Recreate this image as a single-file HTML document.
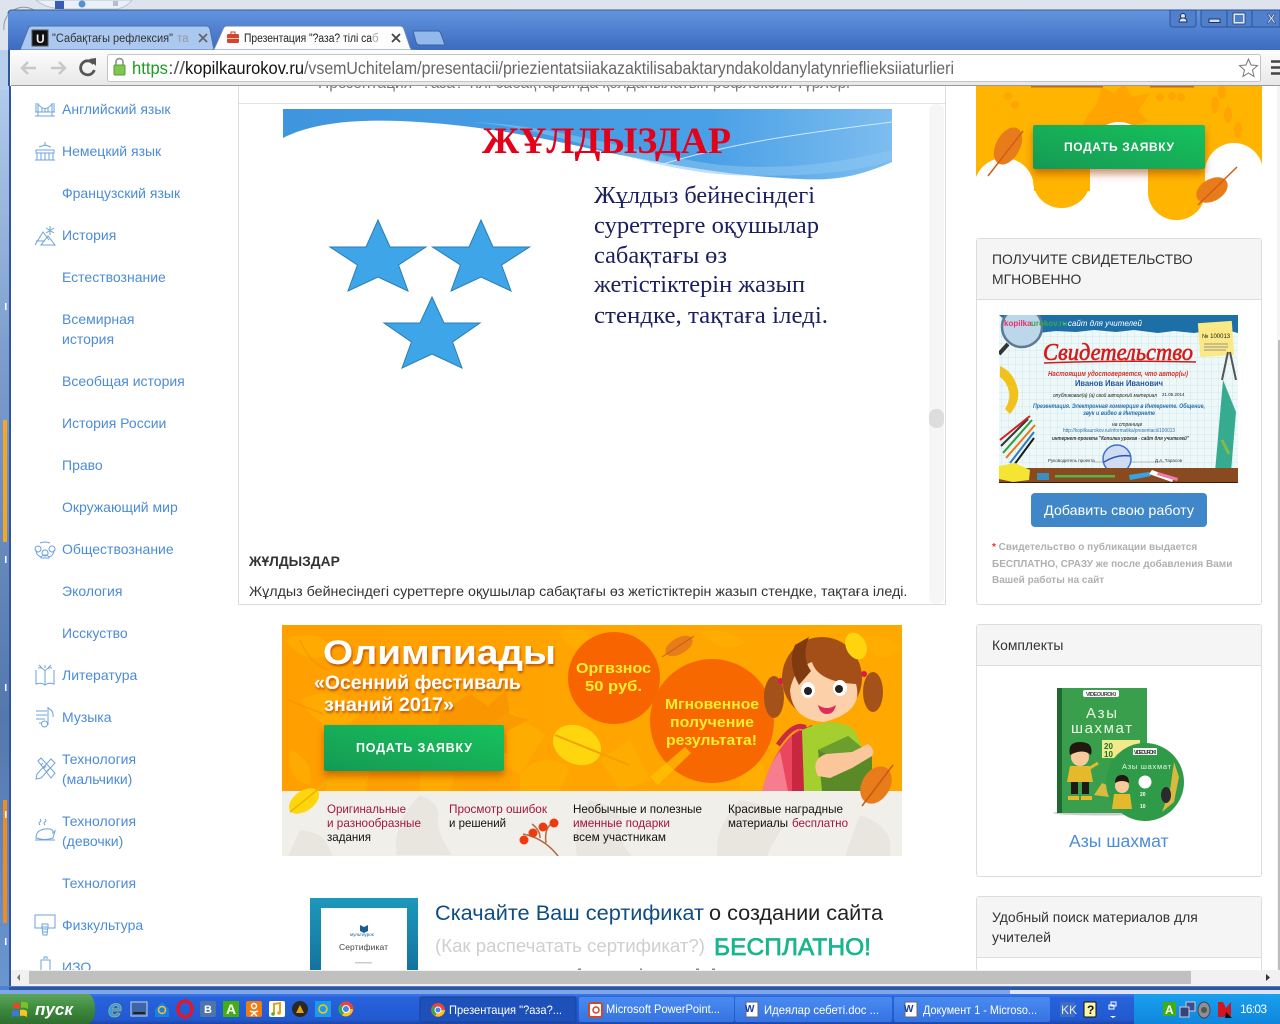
<!DOCTYPE html>
<html lang="ru"><head><meta charset="utf-8"><title>Презентация</title>
<style>
html,body{margin:0;padding:0;width:1280px;height:1024px;overflow:hidden;background:#fff;font-family:"Liberation Sans","DejaVu Sans",sans-serif;color:#333}
.a{position:absolute;white-space:nowrap}
svg{position:absolute;left:0;top:0}
.side{color:#4c8cd6;font-size:14px;line-height:20px;left:62px}
.ph{font-size:13.9px;line-height:20px;color:#333;left:992px}
.panel{position:absolute;left:976px;width:284px;border:1px solid #ddd;border-radius:3px;background:#fff}
.phead{position:absolute;left:0;top:0;right:0;background:#f5f5f5;border-bottom:1px solid #ddd}
.sm{font-size:10px;line-height:16px;color:#b0b0b0;font-weight:bold;left:992px}
</style></head><body>

<!-- page content -->
<div class="a" style="left:238px;top:86px;width:706px;height:518px;border-left:1px solid #ddd;border-right:1px solid #ddd;border-bottom:1px solid #ddd"></div>
<div class="a" style="left:239px;top:103px;width:706px;height:1px;background:#dfe3e8"></div>
<div class="a" style="left:318px;top:75px;font-size:15.6px;line-height:18px;color:#777">Презентация "?аза? тілі сабақтарында қолданылатын рефлексия түрлері</div>
<div class="a" style="left:929px;top:104px;width:15px;height:500px;background:#f6f6f6;border-radius:7px"></div>
<div class="a" style="left:929px;top:409px;width:15px;height:19px;background:#ddd;border-radius:7px"></div>
<div class="a" style="left:249px;top:553px;font-size:13.8px;line-height:18px;font-weight:bold;color:#333">ЖҰЛДЫЗДАР</div>
<div class="a" style="left:249px;top:583px;font-size:14.25px;line-height:18px;color:#333">Жұлдыз бейнесіндегі суреттерге оқушылар сабақтағы өз жетістіктерін жазып стендке, тақтаға іледі.</div>

<div class="panel" style="top:238px;height:365px"><div class="phead" style="height:60px"></div></div>
<div class="panel" style="top:624px;height:251px"><div class="phead" style="height:40px"></div></div>
<div class="panel" style="top:896px;height:100px"><div class="phead" style="height:60px"></div></div>

<svg width="1280" height="1024" viewBox="0 0 1280 1024" font-family="Liberation Sans, sans-serif">
<defs>
<clipPath id="cImg"><rect x="283" y="109" width="609" height="270"/></clipPath>
<clipPath id="cBan"><rect x="282" y="625" width="620" height="166"/></clipPath>
<clipPath id="cBan2"><rect x="282" y="625" width="620" height="231"/></clipPath>
<clipPath id="cTop"><rect x="976" y="86" width="286" height="140"/></clipPath>
<clipPath id="cCert"><rect x="999" y="315" width="239" height="168"/></clipPath>
<clipPath id="cMain"><rect x="0" y="86" width="1280" height="884"/></clipPath>
<linearGradient id="btn" x1="0" y1="1" x2="1" y2="0"><stop offset="0" stop-color="#119a55"/><stop offset="1" stop-color="#16c25c"/></linearGradient>
<linearGradient id="bg1" x1="0" y1="0" x2="1" y2="0"><stop offset="0" stop-color="#ff9f00"/><stop offset="1" stop-color="#ffa900"/></linearGradient>
<pattern id="grid" width="7" height="7" patternUnits="userSpaceOnUse"><rect width="7" height="7" fill="#eef8f8"/><path d="M7 0H0V7" fill="none" stroke="#b8dde2" stroke-width=".6"/></pattern>
<linearGradient id="wave" x1="0" y1="0" x2="1" y2="0"><stop offset="0" stop-color="#3f96de"/><stop offset=".7" stop-color="#4aa0e6"/><stop offset="1" stop-color="#7dbdf0"/></linearGradient>
<linearGradient id="cert" x1="0" y1="0" x2="0" y2="1"><stop offset="0" stop-color="#1c98bb"/><stop offset="1" stop-color="#136f9c"/></linearGradient>
<filter id="sh" x="-20%" y="-20%" width="140%" height="150%"><feDropShadow dx="0" dy="5" stdDeviation="4" flood-color="#a33a00" flood-opacity=".55"/></filter>
<filter id="ts" x="-5%" y="-20%" width="110%" height="150%"><feDropShadow dx="1" dy="2" stdDeviation="1" flood-color="#b23c00" flood-opacity=".8"/></filter>
</defs>

<!-- slide image -->
<g clip-path="url(#cImg)">
<path d="M283 109H892V162C860 176 835 181 800 179C730 176 670 165 596 150C530 135 470 124 400 121C350 119 310 124 283 138Z" fill="url(#wave)"/>
<path d="M470 122C560 128 640 170 730 175 800 178 860 172 892 160V150C830 165 780 170 720 165 640 155 560 125 470 122Z" fill="#8cc6f2" opacity=".55"/>
<path d="M660 165C740 140 830 130 892 122" stroke="#cfe8fb" fill="none" stroke-width="1"/>
<text x="482" y="153" font-family="Liberation Serif,serif" font-weight="bold" font-size="37" fill="#e50019" textLength="249" lengthAdjust="spacingAndGlyphs">ЖҰЛДЫЗДАР</text>
<g font-family="Liberation Serif,serif" font-size="24" fill="#1a1f5e">
<text x="594" y="203" textLength="221" lengthAdjust="spacingAndGlyphs">Жұлдыз бейнесіндегі</text>
<text x="594" y="233" textLength="225" lengthAdjust="spacingAndGlyphs">суреттерге оқушылар</text>
<text x="594" y="263" textLength="133" lengthAdjust="spacingAndGlyphs">сабақтағы өз</text>
<text x="594" y="292" textLength="211" lengthAdjust="spacingAndGlyphs">жетістіктерін жазып</text>
<text x="594" y="323" textLength="234" lengthAdjust="spacingAndGlyphs">стендке, тақтаға іледі.</text>
</g>
<g fill="#3da5e8" stroke="#2c7db0" stroke-width="1">
<polygon points="378,220 390,247 426,247 398.6,265 408,291 378,277 348,291 357.4,265 330,247 366,247"/>
<polygon points="481,220 493,247 529.6,247 501.6,265 511,291 481,277 451,291 460.4,265 432.5,247 469,247"/>
<polygon points="432,297 444,323 480,323 452.6,342 462,368 432,354 402,368 411.4,342 384,323 420,323"/>
</g>
</g>

<!-- olympiad banner -->
<g clip-path="url(#cBan2)">
<rect x="282" y="625" width="620" height="166" fill="url(#bg1)"/>
<rect x="282" y="791" width="620" height="65" fill="#f1efea"/>
<g fill="#ffb000" opacity=".7">
<path d="M285 640q30-15 50 10q-25 20-50-10zM300 700q40-20 60 15q-30 30-60-15zM470 740l40-30 35 25-25 40zM560 632q25-10 40 12q-25 18-40-12zM860 640q20-10 40 8q-18 22-40-8z"/>
<path d="M290 750q25 10 20 35q-25-5-20-35zM520 775q20-25 50-8l-10 24h-40zM600 760l30-20 20 40-30 10z"/>
<path d="M330 775q15-10 40-5l-5 21h-40zM420 770q20-5 35 5l-5 16h-30zM700 632q25-5 45 10q-20 15-45-10zM740 770l15-30 15 50h-30z"/>
</g>
<g fill="#f58a00" opacity=".45">
<path d="M440 712l30-18 18 12 18-16 4 24 18 6-22 12 2 22-24-8-18 14-6-22-22-6z"/>
<path d="M300 640q10 25 30 30M288 700l35 14" stroke="#f58a00" fill="none" stroke-width="2"/>
</g>
<g fill="#e9e6df">
<path d="M420 795q20 8 18 22q-2 14 14 38h-55q-6-30 23-60zM590 800q28 6 32 22q-6 18 10 34h-55q-6-30 13-56zM740 800q32 4 45 25q-12 16-18 31h-50q-2-30 23-56zM860 815q24 8 30 25v16h-45zM300 830q18 2 25 10l8 16h-45z"/>
</g>
<circle cx="614" cy="678" r="46" fill="#f76400"/>
<circle cx="712" cy="721" r="62" fill="#f76900"/>
<path d="M650 777l35-30 6 6-33 32z" fill="#ffc400" opacity=".7"/>
<ellipse cx="679" cy="646" rx="15" ry="8" transform="rotate(-30 679 646)" fill="#e97c1a"/>
<path d="M662 657L694 636" stroke="#c25b14" stroke-width="1"/>
<ellipse cx="577" cy="745" rx="25" ry="19" transform="rotate(25 577 745)" fill="#ffd60d"/>
<path d="M555 735L629 765" stroke="#f2a100" stroke-width="2"/>
<ellipse cx="304" cy="801" rx="17" ry="10" transform="rotate(-35 304 801)" fill="#ffd60d"/>
<path d="M290 812L332 778" stroke="#f0b400" stroke-width="1.5"/>
<text x="323" y="664" font-size="34" font-weight="bold" fill="#fff" filter="url(#ts)" textLength="233" lengthAdjust="spacingAndGlyphs">Олимпиады</text>
<text x="314" y="689" font-size="19" font-weight="bold" fill="#fff" filter="url(#ts)" textLength="207" lengthAdjust="spacingAndGlyphs">«Осенний фестиваль</text>
<text x="324" y="711" font-size="19" font-weight="bold" fill="#fff" filter="url(#ts)" textLength="130" lengthAdjust="spacingAndGlyphs">знаний 2017»</text>
<rect x="324" y="725" width="180" height="46" rx="2" fill="url(#btn)" filter="url(#sh)"/>
<text x="356" y="752" font-size="12.5" font-weight="bold" fill="#fff" textLength="116">ПОДАТЬ ЗАЯВКУ</text>
<g font-size="15" font-weight="bold" fill="#ffee2e">
<text x="576" y="673" textLength="75" lengthAdjust="spacingAndGlyphs">Оргвзнос</text>
<text x="585" y="691" textLength="57" lengthAdjust="spacingAndGlyphs">50 руб.</text>
<text x="665" y="709" textLength="94" lengthAdjust="spacingAndGlyphs">Мгновенное</text>
<text x="670" y="727" textLength="84" lengthAdjust="spacingAndGlyphs">получение</text>
<text x="666" y="745" textLength="91" lengthAdjust="spacingAndGlyphs">результата!</text>
</g>
<!-- girl -->
<g clip-path="url(#cBan)">
<path d="M762 791q12-45 38-62l18 62z" fill="#ec4560"/><path d="M762 791q6-25 18-40l8 40z" fill="#f57d8e"/>
<path d="M778 745q15-22 26-18l14 40" fill="none" stroke="#c92b45" stroke-width="5"/>
<path d="M792 735l20-10 8 30-14 36h-14z" fill="#c8283f"/>
<path d="M802 730q30-14 50-2q14 16 16 63h-64z" fill="#a4cf2f"/>
<path d="M818 750l30-14 24 20v35h-50z" fill="#5a8a28"/>
<path d="M818 750l26 12 28-6-24-20z" fill="#6b9e2c"/>
<path d="M818 776q-8-16 8-22l26-2 16-8q8 6 4 12l-20 12-22 10z" fill="#fbc79a"/>
</g>
<ellipse cx="774" cy="697" rx="10" ry="21" fill="#a5521a"/>
<ellipse cx="873" cy="692" rx="10" ry="20" fill="#a5521a"/>
<circle cx="781" cy="681" r="3" fill="#e0174e"/><circle cx="864" cy="674" r="3" fill="#e0174e"/>
<ellipse cx="822" cy="678" rx="40" ry="41" fill="#a44f17"/>
<path d="M790 690q4-22 22-28q6 20 44 22q8 28-32 38q-32-2-34-32z" fill="#fcd0a8"/>
<path d="M809 637q-8 20 2 34l-12 14q-12-22-4-40z" fill="#7f3a10"/>
<ellipse cx="808" cy="690" rx="7" ry="8" fill="#fff"/><circle cx="808" cy="691" r="4" fill="#222"/>
<ellipse cx="840" cy="688" rx="7" ry="8" fill="#fff"/><circle cx="839" cy="689" r="4" fill="#222"/>
<path d="M818 705q9 6 18 0q-2 9-9 9t-9-9z" fill="#e02b5d"/>
<ellipse cx="856" cy="646" rx="10" ry="14" transform="rotate(-25 856 646)" fill="#ffd60d"/>
<ellipse cx="876" cy="785" rx="14" ry="20" transform="rotate(30 876 785)" fill="#e97c1a"/>
<path d="M862 806L893 765" stroke="#c25b14" stroke-width="1.5"/>
<!-- lower texts -->
<g font-size="12" fill="#111">
<text x="327" y="813" fill="#a3163f" textLength="79" lengthAdjust="spacingAndGlyphs">Оригинальные</text>
<text x="327" y="827" fill="#a3163f" textLength="94" lengthAdjust="spacingAndGlyphs">и разнообразные</text>
<text x="327" y="841" textLength="44" lengthAdjust="spacingAndGlyphs">задания</text>
<text x="449" y="813" fill="#a3163f" textLength="98" lengthAdjust="spacingAndGlyphs">Просмотр ошибок</text>
<text x="449" y="827" textLength="57" lengthAdjust="spacingAndGlyphs">и решений</text>
<text x="573" y="813" textLength="129" lengthAdjust="spacingAndGlyphs">Необычные и полезные</text>
<text x="573" y="827" fill="#a3163f" textLength="97" lengthAdjust="spacingAndGlyphs">именные подарки</text>
<text x="573" y="841" textLength="93" lengthAdjust="spacingAndGlyphs">всем участникам</text>
<text x="728" y="813" textLength="115" lengthAdjust="spacingAndGlyphs">Красивые наградные</text>
<text x="728" y="827" textLength="60" lengthAdjust="spacingAndGlyphs">материалы</text>
<text x="792" y="827" fill="#a3163f" textLength="56" lengthAdjust="spacingAndGlyphs">бесплатно</text>
</g>
<path d="M558 856q-14-18-35-22M546 843q-2-14 6-20M540 838q0-8-8-14" fill="none" stroke="#b36b45" stroke-width="1.5"/>
<g fill="#ee3a0c"><circle cx="554" cy="823" r="4.5"/><circle cx="543" cy="827" r="4.5"/><circle cx="533" cy="833" r="4.5"/><circle cx="524" cy="840" r="4.5"/></g>
</g>

<g clip-path="url(#cMain)">
<!-- top right banner -->
<g clip-path="url(#cTop)">
<rect x="976" y="86" width="286" height="105" fill="#ffb400"/>
<g fill="#ffa400">
<path d="M1080 130q10-20 16-25l6-18 12 6 10-10 8 14 18-4-12 18 10 10-20 6-6 20-18-8z"/>
<circle cx="1008" cy="96" r="4"/><circle cx="1015" cy="105" r="4"/><circle cx="1160" cy="97" r="4"/><circle cx="1172" cy="96" r="4"/><circle cx="1181" cy="97" r="4"/>
<ellipse cx="1215" cy="105" rx="4" ry="8"/><ellipse cx="1228" cy="115" rx="4" ry="8"/><ellipse cx="1238" cy="130" rx="4" ry="8"/><ellipse cx="1222" cy="92" rx="4" ry="7"/>
</g>
<path d="M1031 86h72v1.500h-72zM1150 86h44v1.500h-44z" fill="#c4691a"/>
<circle cx="1004" cy="188" r="30" fill="#fff"/><rect x="974" y="188" width="60" height="40" fill="#fff"/>
<circle cx="1119" cy="151" r="29" fill="#fff"/><rect x="1090" y="151" width="58" height="80" fill="#fff"/>
<circle cx="1234" cy="172" r="29" fill="#fff"/><rect x="1205" y="172" width="60" height="60" fill="#fff"/>
<rect x="1033" y="150" width="57" height="58" rx="28" fill="#ffb400"/><rect x="1148" y="150" width="57" height="70" rx="28" fill="#ffb400"/>
<rect x="1033" y="150" width="57" height="25" fill="#ffb400"/><rect x="1148" y="150" width="57" height="25" fill="#ffb400"/>
<ellipse cx="1008" cy="146" rx="12" ry="20" transform="rotate(28 1008 146)" fill="#e97c1a"/>
<path d="M988 176L1023 131" stroke="#d25c18" stroke-width="1.5"/>
<ellipse cx="1212" cy="190" rx="17" ry="11" transform="rotate(-30 1212 190)" fill="#e97c1a"/>
<path d="M1198 205L1237 167" stroke="#d25c18" stroke-width="1.5"/>
<rect x="1033" y="125" width="172" height="44" rx="2" fill="url(#btn)" filter="url(#sh)"/>
<text x="1064" y="151" font-size="12" font-weight="bold" fill="#fff" textLength="110">ПОДАТЬ ЗАЯВКУ</text>
</g>

<!-- certificate of creating site -->
<rect x="310" y="898" width="108" height="80" fill="url(#cert)"/>
<rect x="321" y="908" width="86" height="70" fill="#fff"/>
<path d="M360 925l4 2 4-2v6l-4 2-4-2z" fill="#1d5c8f"/>
<text x="350" y="936" font-size="4.5" fill="#1d5c8f">мультиурок</text>
<text x="339" y="950" font-size="8.5" fill="#444" textLength="49">Сертификат</text>
<rect x="355" y="962" width="17" height="1.5" fill="#ccc"/>
<text x="435" y="920" font-size="21" fill="#0f4c85" textLength="269" lengthAdjust="spacingAndGlyphs">Скачайте Ваш сертификат</text>
<text x="709" y="920" font-size="21" fill="#222" textLength="174" lengthAdjust="spacingAndGlyphs">о создании сайта</text>
<text x="435" y="952" font-size="18.5" fill="#cfcfcf" textLength="270" lengthAdjust="spacingAndGlyphs">(Как распечатать сертификат?)</text>
<text x="714" y="955" font-size="24" fill="#19b58f" stroke="#19b58f" stroke-width=".7" textLength="157" lengthAdjust="spacingAndGlyphs">БЕСПЛАТНО!</text>
<path d="M578 968.500h3v1.500h-3zM640 968.500h2v1.500h-2zM696 968.500h3v1.500h-3zM712 968.500h3v1.500h-3z" fill="#888"/>

<!-- certificate -->
<g clip-path="url(#cCert)">
<rect x="999" y="315" width="239" height="168" fill="url(#grid)"/>
<path d="M999 315H1238V333l-8-2-10 3-12-3-14 2-20-2-16 2-24-3-18 2-22-2-18 2-20-1-18 2-18-1z" fill="#1d6fa8"/>
<circle cx="1022" cy="327" r="20" fill="#bcd6ea" stroke="#5b7a93" stroke-width="2.5"/>
<text x="1004" y="326" font-size="8" font-weight="bold" fill="#e3316a">kopilka</text><text x="1031" y="326" font-size="8" font-weight="bold" fill="#39a849">urokov.ru</text>
<path d="M1008 344l-9 10" stroke="#333" stroke-width="4"/>
<text x="1063" y="326" font-size="8" font-style="italic" fill="#fff">- сайт для учителей</text>
<rect x="1199" y="322" width="34" height="34" fill="#fbe985" transform="rotate(-4 1216 339)"/>
<text x="1202" y="338" font-size="6" fill="#222">№ 100013</text>
<path d="M1204 344h24M1204 347h24M1204 350h22" stroke="#778" stroke-width=".8"/>
<text x="1043" y="360" font-family="Liberation Serif,serif" font-style="italic" font-size="24" fill="#d41c1c" stroke="#d41c1c" stroke-width=".6" textLength="150" lengthAdjust="spacingAndGlyphs">Свидетельство</text>
<path d="M1044 363q70-3 152-1" stroke="#c42020" stroke-width="1.5" fill="none"/>
<text x="1048" y="376" font-size="7" font-style="italic" font-weight="bold" fill="#d6302a" textLength="140" lengthAdjust="spacingAndGlyphs">Настоящим удостоверяется, что автор(ы)</text>
<text x="1075" y="386" font-size="8" font-weight="bold" fill="#2456a0" textLength="88" lengthAdjust="spacingAndGlyphs">Иванов Иван Иванович</text>
<text x="1053" y="397" font-size="5.5" font-style="italic" fill="#222" textLength="104" lengthAdjust="spacingAndGlyphs">опубликовал(а) (а) свой авторский материал</text>
<text x="1162" y="396" font-size="4.5" fill="#222">21.05.2014</text>
<text x="1033" y="408" font-size="6" font-style="italic" font-weight="bold" fill="#2a6fae" textLength="172" lengthAdjust="spacingAndGlyphs">Презентация. Электронная коммерция в Интернете. Общение,</text>
<text x="1083" y="415" font-size="6" font-style="italic" font-weight="bold" fill="#2a6fae" textLength="72" lengthAdjust="spacingAndGlyphs">звук и видео в Интернете</text>
<text x="1112" y="426" font-size="5" font-style="italic" fill="#222">на странице</text>
<text x="1063" y="432" font-size="5" fill="#2a6fae" textLength="112" lengthAdjust="spacingAndGlyphs">http://kopilkaurokov.ru/informatika/presentacii/100013</text>
<text x="1052" y="440" font-size="5.5" font-style="italic" font-weight="bold" fill="#333" textLength="137" lengthAdjust="spacingAndGlyphs">интернет-проекта "Копилка уроков - сайт для учителей"</text>
<text x="1048" y="462" font-size="4.5" fill="#333">Руководитель проекта</text>
<path d="M1093 462h72" stroke="#888" stroke-width=".6"/>
<text x="1155" y="462" font-size="4.5" fill="#333">Д.А. Тарасов</text>
<circle cx="1117" cy="459" r="14" fill="#cfdcf4" stroke="#3e6fd0" stroke-width="1.5"/>
<path d="M1104 462q13-8 26-6" stroke="#2c56b8" stroke-width="1.500" fill="none"/>
<path d="M1000 366q14 6 18 24 2 12-8 24l-5-5q6-10 4-18-3-10-9-14z" fill="#f2c21c"/>
<g stroke-width="2"><path d="M1032 420L1003 453" stroke="#2f9d3c"/><path d="M1028 419L1001 446" stroke="#333"/><path d="M1035 425L1006 458" stroke="#e67817"/><path d="M1034 432L1010 463" stroke="#2b7cc8"/><path d="M1030 416L1000 440" stroke="#d82020"/><path d="M1034 438L1014 465" stroke="#1a1a1a"/></g>
<path d="M1223 380l-8 92h16l5-60z" fill="#36ab8f"/>
<path d="M1228 352l-6 28M1230 352l6 28" stroke="#555" stroke-width="2"/>
<path d="M1222 440l7 14" stroke="#8ab845" stroke-width="3"/>
<rect x="999" y="468" width="239" height="15" fill="#8a4a20"/>
<rect x="999" y="482" width="239" height="1" fill="#3a1c0a"/>
<path d="M999 466l16-3 15 7-1 10-16 2-14-3z" fill="#f4e532"/>
<rect x="1037" y="473" width="12" height="7" fill="#3a8fc2"/>
<rect x="1055" y="475" width="60" height="2.5" fill="#4fb54d"/>
<path d="M1129 475l20-3 2 4-21 4z" fill="#35a6e2"/><path d="M1152 470l22 8-2 4-23-8z" fill="#fff"/><path d="M1158 472l20 6-1 3-20-6z" fill="#f07aa8"/>
</g>

<!-- add button -->
<rect x="1031" y="493" width="176" height="34" rx="4" fill="#3f87c9"/>
<text x="1044" y="515" font-size="14" fill="#fff" textLength="150" lengthAdjust="spacingAndGlyphs">Добавить свою работу</text>

<!-- DVD -->
<ellipse cx="1105" cy="813" rx="52" ry="2.5" fill="#ccc"/>
<rect x="1057" y="688" width="90" height="125" fill="#3a9f4c"/>
<rect x="1057" y="688" width="5" height="125" fill="#1f6b2f"/>
<rect x="1083" y="690" width="36" height="7" rx="2" fill="#fff"/>
<text x="1086" y="696" font-size="5.5" font-weight="bold" fill="#444" textLength="30">VIDEOUROKI</text>
<text x="1086" y="718" font-size="15" fill="#e9f7e4" textLength="31">Азы</text>
<text x="1071" y="733" font-size="15" fill="#e9f7e4" textLength="61">шахмат</text>
<rect x="1102" y="740" width="38" height="18" fill="#f3e88a"/>
<text x="1104" y="749" font-size="8" font-weight="bold" fill="#173">20</text><text x="1104" y="757" font-size="8" font-weight="bold" fill="#173">10</text>
<circle cx="1080" cy="757" r="9" fill="#f7c99b"/>
<path d="M1070 755q-3-13 10-13 14 0 11 13-8-7-21 0z" fill="#22180f"/>
<path d="M1070 766h20l3 16h-26z" fill="#e4b92b"/>
<path d="M1071 782h7v12h-7zM1082 782h7v12h-7z" fill="#1e1a16"/>
<path d="M1068 796h11v4h-11zM1081 796h11v4h-11z" fill="#e4b92b"/>
<path d="M1090 768l8-5" stroke="#e4b92b" stroke-width="3"/>
<path d="M1094 795l8-12 14 6v9z" fill="#d9b93f"/>
<circle cx="1145" cy="782" r="39" fill="#2f9a48"/>
<path d="M1133 748h24v7h-24z" fill="#f4f7f2"/>
<text x="1134" y="754" font-size="5" font-weight="bold" fill="#333" textLength="22">VIDEOUROKI</text>
<text x="1122" y="769" font-size="7.5" fill="#e9f7e4" textLength="49">Азы шахмат</text>
<circle cx="1145" cy="782" r="6.5" fill="#fff"/>
<circle cx="1122" cy="786" r="7" fill="#f7c99b"/><path d="M1115 783q0-8 7-8t7 8q-7-4-14 0z" fill="#22180f"/>
<path d="M1114 794h16l2 15h-20z" fill="#e4b92b"/>
<text x="1140" y="796" font-size="5" font-weight="bold" fill="#fff">20</text><text x="1140" y="808" font-size="5" font-weight="bold" fill="#fff">10</text>
<path d="M1174 762l5 15-5 25-12 10 8-22z" fill="#d9b93f"/><ellipse cx="1166" cy="795" rx="5" ry="8" fill="#2a2a2a"/>
</g>
</svg>

<!-- sidebar -->
<div class="a side" style="top:99px">Английский язык</div>
<div class="a side" style="top:141px">Немецкий язык</div>
<div class="a side" style="top:183px">Французский язык</div>
<div class="a side" style="top:225px">История</div>
<div class="a side" style="top:267px">Естествознание</div>
<div class="a side" style="top:309px">Всемирная<br>история</div>
<div class="a side" style="top:371px">Всеобщая история</div>
<div class="a side" style="top:413px">История России</div>
<div class="a side" style="top:455px">Право</div>
<div class="a side" style="top:497px">Окружающий мир</div>
<div class="a side" style="top:539px">Обществознание</div>
<div class="a side" style="top:581px">Экология</div>
<div class="a side" style="top:623px">Исскуство</div>
<div class="a side" style="top:665px">Литература</div>
<div class="a side" style="top:707px">Музыка</div>
<div class="a side" style="top:749px">Технология<br>(мальчики)</div>
<div class="a side" style="top:811px">Технология<br>(девочки)</div>
<div class="a side" style="top:873px">Технология</div>
<div class="a side" style="top:915px">Физкультура</div>
<div class="a side" style="top:957px">ИЗО</div>

<!-- panel texts -->
<div class="a ph" style="top:249px">ПОЛУЧИТЕ СВИДЕТЕЛЬСТВО<br>МГНОВЕННО</div>
<div class="a sm" style="top:540px"><span style="color:#e33">*</span> Свидетельство о публикации выдается</div>
<div class="a sm" style="top:557px">БЕСПЛАТНО, СРАЗУ же после добавления Вами</div>
<div class="a sm" style="top:573px">Вашей работы на сайт</div>
<div class="a ph" style="top:635px">Комплекты</div>
<div class="a" style="left:1069px;top:831px;font-size:17.6px;line-height:20px;color:#4c8cd6">Азы шахмат</div>
<div class="a ph" style="top:907px">Удобный поиск материалов для<br>учителей</div>

<!-- chrome overlay -->
<svg width="1280" height="1024" viewBox="0 0 1280 1024" font-family="Liberation Sans, sans-serif">
<defs>
<linearGradient id="tb" x1="0" y1="0" x2="0" y2="1"><stop offset="0" stop-color="#6295e0"/><stop offset="1" stop-color="#3d6bc0"/></linearGradient>
<linearGradient id="tool" x1="0" y1="0" x2="0" y2="1"><stop offset="0" stop-color="#fdfdfd"/><stop offset="1" stop-color="#e8e8e8"/></linearGradient>
<linearGradient id="strip" x1="0" y1="0" x2="0" y2="1"><stop offset="0" stop-color="#b2cbec"/><stop offset=".3" stop-color="#7c9dcc"/><stop offset=".7" stop-color="#5478ad"/><stop offset="1" stop-color="#6a96d0"/></linearGradient>
<linearGradient id="task" x1="0" y1="0" x2="0" y2="1"><stop offset="0" stop-color="#3d7ae6"/><stop offset=".12" stop-color="#2663dc"/><stop offset=".85" stop-color="#2259d0"/><stop offset="1" stop-color="#1b45a8"/></linearGradient>
<linearGradient id="start" x1="0" y1="0" x2="0" y2="1"><stop offset="0" stop-color="#5ca55b"/><stop offset=".5" stop-color="#3d8a3d"/><stop offset="1" stop-color="#2f6e30"/></linearGradient>
<linearGradient id="tray" x1="0" y1="0" x2="0" y2="1"><stop offset="0" stop-color="#1aa0ee"/><stop offset="1" stop-color="#0f86dc"/></linearGradient>
<linearGradient id="tbn" x1="0" y1="0" x2="0" y2="1"><stop offset="0" stop-color="#4a8bf0"/><stop offset="1" stop-color="#3573e2"/></linearGradient>
</defs>

<!-- sidebar icons -->
<g fill="none" stroke="#6ea3dc" stroke-width="1">
<path d="M35 112h20M35 116h20M38 103v13M52 103v13M36 103v9M54 103v9M38 104q7 9 14 0M42 108v4M45 109v3M48 108v4"/>
<path d="M45 142v4M39 147l6-2 6 2M36 150h18v3H36zM37 153v7M41 153v7M45 153v7M49 153v7M53 153v7M35 160h20"/>
<path d="M35 245l8-13 6 8M36 241h9M41 245h14l-7-9zM50 226v9M46 228l8 5M54 228l-8 5"/>
<path d="M38 546a3 3 0 1 0 .1 0M52 546a3 3 0 1 0 .1 0M45 550a3 3 0 1 0 .1 0M41 558c0-4 8-4 8 0zM36 550c0 4 2 6 5 7M54 550c0 4-2 6-5 7M40 543q5-2 10 0"/>
<path d="M36 670v14q5-2 9 1 4-3 9-1v-14M38 668q4-1 7 3 3-4 7-3M45 671v14M39 665l3 3M45 665v3M51 665l-3 3"/>
<path d="M36 711h11M36 715h11M36 719h9M39 723h3"/>
<path d="M48 707v18M48 708q6 3 5 9"/><circle cx="44.500" cy="724" r="3"/>
<path d="M37 774l14-15 4 4-14 15-5 1zM38 761l3-3 14 15-4 5zM41 765l2-2M44 768l2-2M47 771l2-2"/>
<path d="M35 840h20M36 838q0-8 9-9t8 4l2-2-2 7q-8 3-17 0zM40 825q-2-2 0-3t0-3M45 825q-2-2 0-3t0-3"/>
<path d="M42 928h-7v-13h20v13h-7M42 924h6v3h-6zM42 927l1 8h4l1-8M42 929h6M43 932h4"/>
<path d="M41 972v-12h9v12M44 959v-2h3v2"/>
</g>

<!-- left strip -->
<rect x="0" y="86" width="9" height="900" fill="url(#strip)"/>
<rect x="9" y="86" width="2" height="900" fill="#2f55a0"/>
<rect x="3" y="420" width="4" height="122" fill="#f5a623"/>
<rect x="3" y="800" width="4" height="123" fill="#f28c1e"/>
<g fill="#fff"><rect x="5" y="303" width="1.500" height="7"/><rect x="5" y="556" width="1.500" height="7"/><rect x="5" y="684" width="1.500" height="7"/><rect x="5" y="811" width="1.500" height="7"/><rect x="5" y="938" width="1.500" height="7"/></g>

<!-- scrollbar -->
<rect x="11" y="970" width="1269" height="17" fill="#f1f1f1"/>
<rect x="29" y="971" width="1162" height="13" fill="#c0c0c0"/>
<path d="M20 974v7l-3-3.500z" fill="#777"/><path d="M1266 974v7l4-3.500z" fill="#333"/>

<!-- desktop top -->
<rect x="0" y="0" width="1280" height="10" fill="#dde4ee"/>
<rect x="0" y="10" width="9" height="76" fill="#dce4ee"/>
<path d="M4 30a20 20 0 0 1 30-20" fill="none" stroke="#8d98a8" stroke-width="1"/>
<path d="M36 0q10 9 30 9h50q10-1 16-9z" fill="#eaf0f8" stroke="#b7c4d6"/>
<rect x="55" y="1" width="9" height="8" fill="#3a5bb0"/>
<circle cx="82" cy="4" r="3.500" fill="#5b8fd0"/><rect x="113" y="1" width="5" height="5" fill="#b5bfcc"/>
<rect x="0" y="50" width="8" height="40" fill="#b8d0ee"/>

<!-- title bar -->
<path d="M8 14q0-4 4-4H1280V50H8z" fill="url(#tb)"/>
<path d="M8 14q0-4 4-4H1280" fill="none" stroke="#3f5a86"/>
<path d="M1170 10h26v14q0 3-3 3h-20q-3 0-3-3z" fill="#507fcc" stroke="#2f5296"/>
<path d="M1201 10h79v17h-76q-3 0-3-3z" fill="#507fcc" stroke="#2f5296"/>
<path d="M1227 10v17M1252 10v17" stroke="#2f5296"/>
<circle cx="1183" cy="16" r="2.500" fill="#dbe6f6" stroke="#1f3260"/><path d="M1179 22q0-4 4-4t4 4z" fill="#dbe6f6" stroke="#1f3260"/>
<rect x="1209" y="19" width="11" height="3.500" fill="#cfdff5" stroke="#1f3260"/>
<rect x="1234" y="14" width="10" height="9" fill="none" stroke="#dbe6f6" stroke-width="2"/><rect x="1233" y="13" width="12" height="11" fill="none" stroke="#1f3260" stroke-width=".7"/>
<text x="1267" y="23" font-size="13" font-weight="bold" fill="#dbe6f6" stroke="#1f3260" stroke-width=".5">X</text>

<!-- tabs -->
<path d="M20 50L28 29q1-3 4-3H206q3 0 4 3l4 21z" fill="#aac8f0" stroke="#4c6fa8"/>
<path d="M208 50h3q3 0 4-3l8-18q1-3 4-3H400q3 0 4 3l6 18q1 3 4 3h3z" fill="#fdfdfd" stroke="#6a83a8"/>
<path d="M413 31h25q2 0 3 3l4 11h-25q-3 0-4-3z" fill="#93b8ea" stroke="#3b62a8"/>
<rect x="32" y="30" width="16" height="16" fill="#111" stroke="#555"/>
<text x="36" y="43" font-size="12" font-weight="bold" fill="#eee">U</text>
<text x="52" y="42" font-size="11.500" fill="#333" textLength="121" lengthAdjust="spacingAndGlyphs">"Сабақтағы рефлексия"</text>
<text x="177" y="42" font-size="11.500" fill="#999">та</text>
<path d="M199 34l8 8M207 34l-8 8" stroke="#666" stroke-width="1.800"/>
<rect x="227" y="34" width="12" height="9" rx="1.500" fill="#d2452a"/><path d="M231 34v-2h4v2" stroke="#d2452a" fill="none"/><rect x="227" y="38" width="12" height="1" fill="#f4c6b0"/>
<text x="244" y="42" font-size="11.500" fill="#222" textLength="128" lengthAdjust="spacingAndGlyphs">Презентация "?аза? тілі са</text>
<text x="372" y="42" font-size="11.500" fill="#aaa">б</text>
<path d="M392 34l8 8M400 34l-8 8" stroke="#444" stroke-width="1.800"/>

<!-- toolbar -->
<rect x="11" y="50" width="1269" height="35" fill="url(#tool)"/>
<path d="M9 50V86" stroke="#2f55a0" stroke-width="2"/>
<rect x="11" y="85" width="1269" height="1" fill="#9a9a9a"/>
<rect x="107.500" y="54.500" width="1153" height="27" rx="2" fill="#fff" stroke="#c4c4c4"/>
<path d="M36 68H23M28 62l-6 6 6 6" fill="none" stroke="#c8c8c8" stroke-width="2.500"/>
<path d="M51 68H64M59 62l6 6-6 6" fill="none" stroke="#c8c8c8" stroke-width="2.500"/>
<path d="M93.500 64a7 7 0 1 0 .8 6" fill="none" stroke="#555" stroke-width="2.800"/><path d="M89 59l7-1v8z" fill="#555"/>
<rect x="114" y="65" width="11" height="10" rx="1" fill="#7ec850" stroke="#5b9a38"/>
<path d="M116 65v-3a3.500 3.500 0 0 1 7 0v3" fill="none" stroke="#888" stroke-width="1.500"/>
<g font-size="17.500">
<text x="132" y="74" fill="#1f9a22" textLength="36" lengthAdjust="spacingAndGlyphs">https</text>
<text x="168" y="74" fill="#555" textLength="17" lengthAdjust="spacingAndGlyphs">://</text>
<text x="185" y="74" fill="#111" textLength="119" lengthAdjust="spacingAndGlyphs">kopilkaurokov.ru</text>
<text x="304" y="74" fill="#666" textLength="650" lengthAdjust="spacingAndGlyphs">/vsemUchitelam/presentacii/priezientatsiiakazaktilisabaktaryndakoldanylatynrieflieksiiaturlieri</text>
</g>
<path d="M1248.500 59l2.500 6 6.500.5-5 4.500 1.500 6.500-5.500-3.500-5.500 3.500 1.500-6.500-5-4.500 6.500-.5z" fill="#fff" stroke="#777"/>
<path d="M1271 61.500h9M1271 67.500h9M1271 73.500h9" stroke="#444" stroke-width="2.500"/>

<!-- right edge -->
<rect x="1277" y="86" width="3" height="884" fill="#f4f4f4"/>
<rect x="1278" y="340" width="2" height="630" fill="#555" opacity=".35"/>

<!-- bottom frame -->
<rect x="0" y="986" width="1280" height="8" fill="#4f80d0"/>
<rect x="9" y="987" width="1271" height="3" fill="#2f55a0"/>
<rect x="0" y="990" width="1010" height="4" fill="#7fa6e6"/>
<rect x="1010" y="990" width="270" height="4" fill="#dfe5ee"/>

<!-- taskbar -->
<rect x="0" y="994" width="1280" height="30" fill="url(#task)"/>
<path d="M0 994H88q7 2 7 15t-7 15H0z" fill="url(#start)"/>
<g transform="translate(12 1002)"><path d="M1 2q4-2 7 0v5q-3-2-7 0z" fill="#e8452a"/><path d="M9 0q4-1 7 1v6q-3-2-7-1z" fill="#7bbf2c"/><path d="M0 9q4-2 7 0v6q-3-2-7 0z" fill="#3a78e0"/><path d="M8 8q4-1 7 1v6q-3-2-7-1z" fill="#f7c51d"/></g>
<text x="35" y="1015" font-size="17" font-weight="bold" font-style="italic" fill="#fff" textLength="38" lengthAdjust="spacingAndGlyphs">пуск</text>

<!-- quick launch -->
<text x="108" y="1017" font-size="25" font-style="italic" font-weight="bold" fill="#2f9fe8" stroke="#e8c23a" stroke-width=".5">e</text>
<rect x="131" y="1002" width="16" height="14" fill="#3c66a8" stroke="#c6d3e8"/><rect x="133" y="1012" width="12" height="2" fill="#222"/>
<path d="M155 1009l7-7 7 7v8h-14z" fill="#1d7fe0"/><circle cx="162" cy="1010" r="3.500" fill="none" stroke="#f7c51d" stroke-width="1.500"/>
<ellipse cx="185" cy="1009" rx="7" ry="8" fill="none" stroke="#e0182a" stroke-width="3.500"/>
<rect x="200" y="1001" width="16" height="16" rx="2" fill="#4e74a8"/><text x="204" y="1013" font-size="11" font-weight="bold" fill="#fff">B</text>
<rect x="223" y="1001" width="16" height="16" fill="#44ad10"/><text x="226" y="1014" font-size="14" font-weight="bold" fill="#fff">A</text>
<rect x="246" y="1001" width="16" height="16" rx="2" fill="#f07d14"/><circle cx="254" cy="1006" r="2.500" fill="none" stroke="#fff" stroke-width="1.500"/><path d="M250 1011q4 2 8 0M254 1012v1l-3 3M254 1013l3 3" fill="none" stroke="#fff" stroke-width="1.500"/>
<rect x="269" y="1001" width="16" height="16" rx="2" fill="#fff"/><path d="M274 1014v-10l6-1v10" fill="none" stroke="#e9a01a" stroke-width="2"/><circle cx="273" cy="1014" r="1.800" fill="#4caf2c"/><circle cx="279" cy="1013" r="1.800" fill="#e9a01a"/>
<circle cx="300" cy="1009" r="8" fill="#2a2a20"/><path d="M296 1013l4-8 4 8z" fill="#e9a01a"/>
<rect x="315" y="1001" width="16" height="16" fill="#1d9be8"/><circle cx="323" cy="1009" r="4" fill="none" stroke="#f7c51d" stroke-width="1.500"/>
<circle cx="346" cy="1009" r="7.500" fill="#e8453c"/><path d="M346 1009l7 0a7.500 7.500 0 0 1-11 6.500z" fill="#f7c51d"/><path d="M346 1009l-4 6.500a7.500 7.500 0 0 1-2-11z" fill="#34a853"/><circle cx="346" cy="1009" r="3.500" fill="#4285f4" stroke="#fff"/>

<!-- task buttons -->
<rect x="420" y="997" width="156" height="25" rx="2" fill="#1d50b8" stroke="#1a4096"/>
<rect x="579" y="997" width="155" height="25" rx="2" fill="url(#tbn)"/>
<rect x="735" y="997" width="157" height="25" rx="2" fill="url(#tbn)"/>
<rect x="894" y="997" width="156" height="25" rx="2" fill="url(#tbn)"/>
<circle cx="438" cy="1010" r="7" fill="#e8453c"/><path d="M438 1010l7 0a7 7 0 0 1-10 6z" fill="#f7c51d"/><path d="M438 1010l-3 6a7 7 0 0 1-2-10z" fill="#34a853"/><circle cx="438" cy="1010" r="3" fill="#4285f4" stroke="#fff"/>
<rect x="589" y="1003" width="13" height="14" rx="2" fill="#fff" stroke="#d24726" stroke-width="2"/><circle cx="596" cy="1010" r="3" fill="none" stroke="#d24726" stroke-width="1.500"/>
<g fill="#fff" stroke="#667"><rect x="746" y="1002" width="12" height="15"/><rect x="905" y="1002" width="12" height="15"/></g>
<text x="745" y="1012" font-size="10" font-weight="bold" fill="#1a3f9c">W</text><text x="904" y="1012" font-size="10" font-weight="bold" fill="#1a3f9c">W</text>
<g font-size="12" fill="#fff">
<text x="449" y="1014" textLength="113" lengthAdjust="spacingAndGlyphs">Презентация "?аза?...</text>
<text x="606" y="1013" textLength="114" lengthAdjust="spacingAndGlyphs">Microsoft PowerPoint...</text>
<text x="764" y="1014" textLength="115" lengthAdjust="spacingAndGlyphs">Идеялар себеті.doc ...</text>
<text x="923" y="1014" textLength="114" lengthAdjust="spacingAndGlyphs">Документ 1 - Microso...</text>
</g>
<rect x="1060" y="1002" width="15" height="15" fill="#3c6cc4"/>
<text x="1061" y="1014" font-size="12" fill="#dbe6f6">KK</text>
<rect x="1084" y="1002" width="12" height="15" rx="1" fill="#fbf6a8" stroke="#111"/><text x="1087" y="1014" font-size="12" font-weight="bold" fill="#111">?</text>
<rect x="1111" y="1002" width="5" height="4" fill="none" stroke="#fff"/><rect x="1109" y="1005" width="5" height="4" fill="none" stroke="#fff"/><path d="M1110 1016h6l-3 2z" fill="#fff"/>

<!-- tray -->
<rect x="1134" y="994" width="146" height="30" fill="url(#tray)"/>
<rect x="1163" y="1002" width="13" height="14" fill="#3fae10"/><text x="1165" y="1014" font-size="12" font-weight="bold" fill="#fff">A</text>
<rect x="1186" y="1002" width="9" height="9" fill="#3a4f8c" stroke="#ccd"/><rect x="1180" y="1007" width="9" height="10" fill="#37447c" stroke="#ccd"/>
<ellipse cx="1204" cy="1010" rx="6" ry="8" fill="#8b9096" stroke="#445"/><circle cx="1204" cy="1010" r="3" fill="#555"/>
<path d="M1218 1002h5l3 6 5-6v14l-4-2-3 3h-6z" fill="#d2151f"/><path d="M1226 1012l6 6h-7z" fill="#111"/>
<text x="1240" y="1013" font-size="12" fill="#fff" textLength="27">16:03</text>
</svg>
</body></html>
